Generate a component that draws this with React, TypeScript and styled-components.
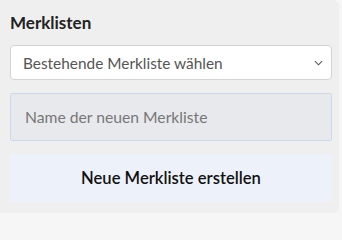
import React from 'react';
import styled, {createGlobalStyle} from "styled-components";

const GlobalStyle = createGlobalStyle`
  html, body {
    margin: 0;
    padding: 0;
    height: 213px;
    overflow: hidden;
    background: #f6f6f6;
  }
  * {
    box-sizing: border-box;
  }
`;

const App = () => {
  return (
    <>
      <GlobalStyle/>
      <Panel>
        <Title>Merklisten</Title>
        <SelectBox>
          <SelectText>Bestehende Merkliste wählen</SelectText>
          <Chevron viewBox="0 0 10 6" width="9" height="6">
            <path d="M1 1 L5 5 L9 1" fill="none" stroke="#555" strokeWidth="1.2"/>
          </Chevron>
        </SelectBox>
        <NameInput placeholder="Name der neuen Merkliste"/>
        <CreateButton>Neue Merkliste erstellen</CreateButton>
      </Panel>
    </>
  );
};

const Panel = styled.div`
  width: 339px;
  height: 213px;
  background: #efefef;
  border-radius: 0 6px 6px 0;
  padding: 14px 7px 0 10px;
  display: flex;
  flex-direction: column;
  font-family: Lato, "Open Sans", sans-serif;
`;
const Title = styled.div`
  color: #222;
  font-size: 17px;
  font-weight: 700;
  line-height: 18px;
  margin-bottom: 13px;
`;
const SelectBox = styled.div`
  height: 35px;
  background: #fff;
  border: 1px solid #d3d3d3;
  border-radius: 4px;
  display: flex;
  align-items: center;
  justify-content: space-between;
  padding: 0 8px 0 12px;
  margin-bottom: 13px;
`;
const SelectText = styled.span`
  color: #555;
  font-size: 15.4px;
`;
const Chevron = styled.svg`
  display: block;
`;
const NameInput = styled.input`
  height: 48px;
  background: #e8e9ec;
  border: 1px solid #cbd9ee;
  border-radius: 2px;
  padding: 0 14px;
  font-family: inherit;
  font-size: 15.7px;
  color: #555;
  margin-bottom: 13px;
  outline: none;

  &::placeholder {
    color: #777;
  }
`;
const CreateButton = styled.button`
  height: 48px;
  background: #edf1fa;
  border: none;
  border-radius: 2px;
  font-family: inherit;
  font-size: 16.6px;
  font-weight: 600;
  color: #111;
`;

export default App;
